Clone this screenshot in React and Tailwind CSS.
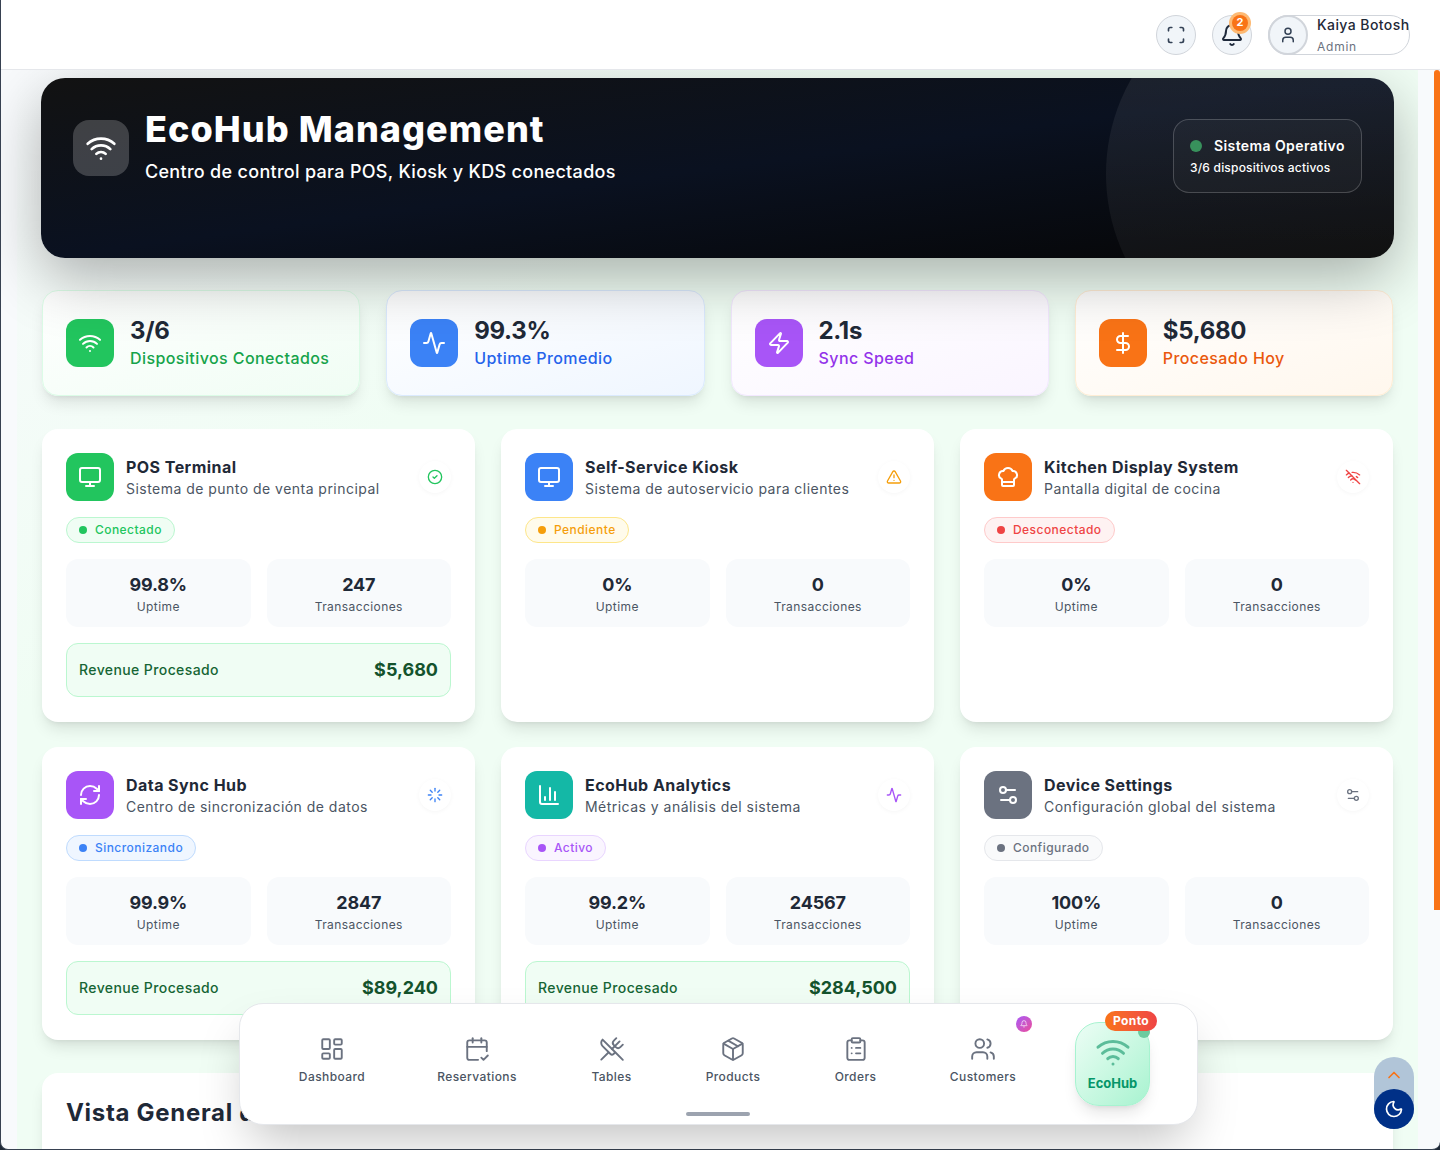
import React from "react";
import {
  Activity, Bell, CalendarCheck2, ChartColumn, ChefHat, ChevronUp, CircleCheck, ClipboardList, DollarSign,
  LayoutDashboard, Loader, Monitor, Moon, Package, RefreshCw, Scan, Settings2, TriangleAlert, User, Users,
  UtensilsCrossed, Wifi, WifiOff, Zap,
} from "lucide-react";

const stats = [
  { icon: Wifi, value: "3/6", label: "Dispositivos Conectados", box: "bg-[#22c55e]", text: "text-[#16a34a]", card: "from-white to-[#f0fdf4] border-[#dcfce7]" },
  { icon: Activity, value: "99.3%", label: "Uptime Promedio", box: "bg-[#3b82f6]", text: "text-[#2563eb]", card: "from-white to-[#eff6ff] border-[#dbeafe]" },
  { icon: Zap, value: "2.1s", label: "Sync Speed", box: "bg-[#a855f7]", text: "text-[#9333ea]", card: "from-white to-[#faf5ff] border-[#f3e8ff]" },
  { icon: DollarSign, value: "$5,680", label: "Procesado Hoy", box: "bg-[#f97316]", text: "text-[#ea580c]", card: "from-white to-[#fff7ed] border-[#ffedd5]" },
];

const cards = [
  { icon: Monitor, box: "bg-[#22c55e]", title: "POS Terminal", sub: "Sistema de punto de venta principal", status: CircleCheck, statusColor: "text-[#22c55e]", badge: "Conectado", badgeCls: "bg-[#f0fdf4] border-[#bbf7d0] text-[#22c55e]", dot: "bg-[#22c55e]", uptime: "99.8%", tx: "247", revenue: "$5,680" },
  { icon: Monitor, box: "bg-[#3b82f6]", title: "Self-Service Kiosk", sub: "Sistema de autoservicio para clientes", status: TriangleAlert, statusColor: "text-[#f59e0b]", badge: "Pendiente", badgeCls: "bg-[#fffbeb] border-[#fde68a] text-[#f59e0b]", dot: "bg-[#f59e0b]", uptime: "0%", tx: "0" },
  { icon: ChefHat, box: "bg-[#f97316]", title: "Kitchen Display System", sub: "Pantalla digital de cocina", status: WifiOff, statusColor: "text-[#ef4444]", badge: "Desconectado", badgeCls: "bg-[#fef2f2] border-[#fecaca] text-[#ef4444]", dot: "bg-[#ef4444]", uptime: "0%", tx: "0" },
  { icon: RefreshCw, box: "bg-[#a855f7]", title: "Data Sync Hub", sub: "Centro de sincronización de datos", status: Loader, statusColor: "text-[#3b82f6]", badge: "Sincronizando", badgeCls: "bg-[#eff6ff] border-[#bfdbfe] text-[#3b82f6]", dot: "bg-[#3b82f6]", uptime: "99.9%", tx: "2847", revenue: "$89,240" },
  { icon: ChartColumn, box: "bg-[#14b8a6]", title: "EcoHub Analytics", sub: "Métricas y análisis del sistema", status: Activity, statusColor: "text-[#a855f7]", badge: "Activo", badgeCls: "bg-[#faf5ff] border-[#e9d5ff] text-[#a855f7]", dot: "bg-[#a855f7]", uptime: "99.2%", tx: "24567", revenue: "$284,500" },
  { icon: Settings2, box: "bg-[#6b7280]", title: "Device Settings", sub: "Configuración global del sistema", status: Settings2, statusColor: "text-[#6b7280]", badge: "Configurado", badgeCls: "bg-[#f9fafb] border-[#e5e7eb] text-[#6b7280]", dot: "bg-[#6b7280]", uptime: "100%", tx: "0" },
];

const navItems = [
  { icon: LayoutDashboard, label: "Dashboard", width: "w-[144px]" },
  { icon: CalendarCheck2, label: "Reservations", width: "w-[146px]" },
  { icon: UtensilsCrossed, label: "Tables", width: "w-[123px]" },
  { icon: Package, label: "Products", width: "w-[120px]" },
  { icon: ClipboardList, label: "Orders", width: "w-[125px]" },
  { icon: Users, label: "Customers", width: "w-[130px]" },
];

function StatCard({ item }) {
  const Icon = item.icon;
  return (
    <div className={`h-[106px] flex items-center gap-4 px-[23px] rounded-2xl border bg-gradient-to-br shadow-lg ${item.card}`}>
      <div className={`w-12 h-12 rounded-xl flex items-center justify-center text-white ${item.box}`}>
        <Icon size={24} strokeWidth={2} />
      </div>
      <div className="pb-0.5">
        <div className="text-2xl leading-8 font-bold text-[#1f2937] tracking-[-0.3px]">{item.value}</div>
        <div className={`-mt-px text-[16px] leading-6 font-medium tracking-[0.42px] ${item.text}`}>{item.label}</div>
      </div>
    </div>
  );
}

function DeviceCard({ item }) {
  const Icon = item.icon;
  const Status = item.status;
  return (
    <div className="bg-white rounded-2xl p-6 pb-[25px] shadow-lg">
      <div className="flex items-center gap-3">
        <div className={`w-12 h-12 shrink-0 rounded-xl flex items-center justify-center text-white ${item.box}`}>
          <Icon size={24} strokeWidth={2} />
        </div>
        <div className="flex-1 min-w-0">
          <div className="text-[16px] leading-6 font-bold text-[#1f2937] tracking-[0.45px]">{item.title}</div>
          <div className="text-[14px] leading-5 text-[#4b5563] tracking-[0.47px] whitespace-nowrap">{item.sub}</div>
        </div>
        <div className="w-8 h-8 rounded-full bg-white shadow-[0_1px_4px_rgba(0,0,0,0.04)] flex items-center justify-center">
          <Status size={16} strokeWidth={2} className={item.statusColor} />
        </div>
      </div>
      <div className={`mt-4 inline-flex items-center gap-2 h-[26px] px-3 rounded-full border text-[12px] font-medium tracking-[0.45px] ${item.badgeCls}`}>
        <span className={`w-2 h-2 rounded-full ${item.dot}`}></span>
        {item.badge}
      </div>
      <div className="mt-4 grid grid-cols-2 gap-4">
        <div className="h-[68px] rounded-xl bg-[#f8fafc] flex flex-col items-center justify-center">
          <div className="text-[18px] leading-7 font-bold text-[#1f2937] tracking-[-0.2px]">{item.uptime}</div>
          <div className="text-[12px] leading-4 text-[#4b5563] tracking-[0.42px]">Uptime</div>
        </div>
        <div className="h-[68px] rounded-xl bg-[#f8fafc] flex flex-col items-center justify-center">
          <div className="text-[18px] leading-7 font-bold text-[#1f2937] tracking-[-0.2px]">{item.tx}</div>
          <div className="text-[12px] leading-4 text-[#4b5563] tracking-[0.42px]">Transacciones</div>
        </div>
      </div>
      {item.revenue && (
        <div className="mt-4 h-[54px] px-3 pb-0.5 rounded-xl border border-[#bbf7d0] bg-[#f0fdf4] flex items-center justify-between">
          <span className="text-[14px] font-medium text-[#166534] tracking-[0.4px]">Revenue Procesado</span>
          <span className="text-[18px] font-bold text-[#14532d]">{item.revenue}</span>
        </div>
      )}
    </div>
  );
}

export default function App() {
  return (
    <div className="relative h-[1150px] w-[1440px] overflow-hidden bg-[#1f2937] font-[Inter,sans-serif]">
      <div className="h-full flex flex-col bg-[#f8fafc] border-l border-b border-[#374151] rounded-b-lg overflow-hidden">
        <header className="h-[70px] shrink-0 bg-white border-b border-[#e5e7eb] flex items-center justify-end gap-4 pr-[30px] relative z-10">
          <button className="w-10 h-10 rounded-full bg-[#f1f5f9] border border-[#d1d5db] flex items-center justify-center text-[#334155]">
            <Scan size={20} />
          </button>
          <button className="relative w-10 h-10 rounded-full bg-[#f1f5f9] border border-[#d1d5db] flex items-center justify-center text-[#1e293b]">
            <Bell size={24} />
            <span className="absolute top-[-1px] left-[19px] w-4 h-4 rounded-full bg-[#f97316] ring-[3px] ring-[#fdba74] text-white text-[11px] font-bold flex items-center justify-center">2</span>
          </button>
          <div className="h-10 w-[142px] rounded-full border border-[#d1d5db] flex items-center bg-white">
            <div className="w-10 h-10 -ml-px shrink-0 rounded-full bg-[#f1f5f9] border-2 border-[#d1d5db] flex items-center justify-center text-[#334155]">
              <User size={18} />
            </div>
            <div className="ml-[9px] whitespace-nowrap">
              <div className="text-[14px] leading-5 font-medium text-[#1f2937] tracking-[0.42px]">Kaiya Botosh</div>
              <div className="text-[12px] leading-4 mt-1 text-[#6b7280] tracking-[0.75px]">Admin</div>
            </div>
          </div>
        </header>
        <div className="flex-1 min-h-0 flex">
          <main className="w-[1417px] shrink-0 overflow-hidden pl-4">
            <div className="h-full px-6 pt-2 bg-gradient-to-br from-[#f8fafc] to-[#f0fdf4] to-30%">
              <section className="relative h-[180px] rounded-3xl overflow-hidden bg-gradient-to-br from-[#121212] via-[#0a1120] to-[#060606] shadow-[0_20px_60px_rgba(0,0,0,0.3)] flex justify-between px-8 pt-8">
                <div className="absolute -top-24 -right-24 w-96 h-96 rounded-full bg-gradient-to-b from-white/[0.08] to-white/[0.03]"></div>
                <div className="relative flex items-start gap-4">
                  <div className="mt-[10px] w-14 h-14 rounded-2xl bg-white/20 flex items-center justify-center text-white">
                    <Wifi size={32} />
                  </div>
                  <div>
                    <h1 className="text-[36px] leading-10 font-extrabold text-white -mt-px tracking-[1.05px]">EcoHub Management</h1>
                    <p className="mt-[9px] text-[18px] leading-7 font-medium text-white tracking-[0.3px]">Centro de control para POS, Kiosk y KDS conectados</p>
                  </div>
                </div>
                <div className="relative mt-[9px] w-[189px] h-[74px] rounded-2xl border border-white/20 bg-white/[0.03] px-4 pt-[14px]">
                  <div className="flex items-center gap-3 text-white text-[14px] leading-6 font-semibold whitespace-nowrap tracking-[0.4px]">
                    <span className="w-3 h-3 rounded-full bg-[#38915c]"></span>
                    Sistema Operativo
                  </div>
                  <div className="text-white text-[12px] leading-5 font-medium tracking-[0.2px] whitespace-nowrap">3/6 dispositivos activos</div>
                </div>
              </section>

              <section className="mt-8 mx-px grid grid-cols-4 gap-[26px]">
                {stats.map((s) => <StatCard key={s.label} item={s} />)}
              </section>

              <section className="mt-[33px] mx-px grid grid-cols-3 gap-x-[26px] gap-y-[25px]">
                {cards.map((c) => <DeviceCard key={c.title} item={c} />)}
              </section>

              <section className="mt-[33px] mx-px h-[200px] rounded-2xl bg-white shadow-lg p-6">
                <h2 className="text-[24px] leading-8 font-bold text-[#1f2937] whitespace-nowrap tracking-[0.7px]">Vista General del Sistema</h2>
              </section>
            </div>
          </main>
          <div className="flex-1 flex justify-end">
            <div className="w-[6px] h-[840px] bg-[#f97316] rounded-t-sm"></div>
          </div>
        </div>
      </div>

      <nav className="absolute left-[239px] top-[1003px] w-[959px] h-[122px] rounded-3xl bg-white border border-[#e5e7eb] shadow-2xl flex items-start pl-[20px]">
        {navItems.map((n) => {
          const Icon = n.icon;
          return (
            <div key={n.label} className={`${n.width} flex flex-col items-center pt-[32px] text-[#6b7280]`}>
              <Icon size={26} strokeWidth={1.75} />
              <span className="mt-[7px] text-[12px] leading-4 font-medium text-[#4b5563] tracking-[0.42px]">{n.label}</span>
            </div>
          );
        })}
        <div className="absolute left-[776px] top-[12px] w-4 h-4 rounded-full bg-gradient-to-br from-[#a855f7] to-[#ec4899] flex items-center justify-center text-white">
          <Bell size={8} />
        </div>
        <div className="absolute left-[835px] top-[18px] w-[75px] h-[84px] rounded-3xl border border-[#a7f3d0] bg-gradient-to-br from-[#ecfdf5] to-[#a7f3d0] shadow-lg flex flex-col items-center pt-[11px]">
          <Wifi size={36} strokeWidth={2} className="text-[#5cbd9a]" />
          <span className="mt-[5px] text-[13px] leading-4 font-bold text-[#059669]">EcoHub</span>
          <span className="absolute -top-[2px] -right-[1px] w-3 h-3 mt-[5px] rounded-full bg-[#6ccb9f]"></span>
        </div>
        <div className="absolute left-[865px] top-[7px] w-[52px] h-5 rounded-full bg-gradient-to-r from-[#f97316] to-[#ef4444] text-white text-[12px] font-bold tracking-[0.4px] flex items-center justify-center">Ponto</div>
        <div className="absolute left-[446px] top-[108px] w-16 h-1 rounded-full bg-[#9ca3af]"></div>
      </nav>

      <div className="absolute left-[1374px] top-[1057px] w-10 h-[72px] rounded-full bg-[#b1c5d8] flex justify-center pt-[8px] text-[#f97316]">
        <ChevronUp size={20} />
      </div>
      <button className="absolute left-[1374px] top-[1089px] w-10 h-10 rounded-full bg-[#003087] flex items-center justify-center text-white">
        <Moon size={20} />
      </button>
    </div>
  );
}
